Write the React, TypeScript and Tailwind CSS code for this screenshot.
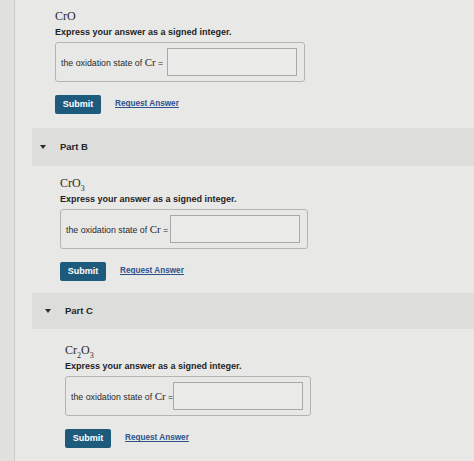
import React from 'react';

const sans = { fontFamily: '"Liberation Sans", Arial, sans-serif' };

function Formula({ children }: { children: React.ReactNode }) {
  return (
    <div className="h-4 leading-4 text-[12px] text-[#2a2a2a] font-['Liberation_Serif',serif]">
      {children}
    </div>
  );
}

function Question({ formula, offset, width }: { formula: React.ReactNode; offset: string; width: string }) {
  return (
    <div className={`flex flex-col ${offset}`}>
      <Formula>{formula}</Formula>
      <p className="mt-[3px] text-[9px] leading-[10px] font-bold text-[#1f1f1f]">
        Express your answer as a signed integer.
      </p>
      <div className={`mt-[5px] h-10 ${width} flex items-center pl-[5px] pr-[7px] border border-[#b4b4b2] rounded-[3px]`}>
        <span className="text-[8.8px] text-[#2a2a2a] whitespace-nowrap">
          the oxidation state of{' '}
          <span className="text-[11px] font-['Liberation_Serif',serif]">Cr</span> =
        </span>
        <div className="ml-auto w-[130px] h-[28px] border border-[#a9a9a7] bg-[#ebebe9]" />
      </div>
      <div className="mt-[13px] flex items-center gap-[14px]">
        <button className="w-[46px] h-[19px] bg-[#1e5a7c] rounded-[2px] text-white text-[9px] font-bold">
          Submit
        </button>
        <a className="text-[8.2px] font-bold text-[#2d528c] underline">Request Answer</a>
      </div>
    </div>
  );
}

function PartHeader({ label, offset, height }: { label: string; offset: string; height: string }) {
  return (
    <div className={`${height} bg-[#dddddb] flex items-center`}>
      <div className={`flex items-center ${offset}`}>
        <span className="w-0 h-0 border-l-[3.5px] border-r-[3.5px] border-t-[4px] border-l-transparent border-r-transparent border-t-[#2b2b2b]" />
        <span className="ml-[14px] text-[9.5px] font-bold text-[#262626]">{label}</span>
      </div>
    </div>
  );
}

export default function App() {
  return (
    <div className="w-[474px] h-[461px] overflow-hidden flex bg-[#e8e8e6]" style={sans}>
      <div className="w-[15px] shrink-0 bg-[#e1e1df] border-r border-[#c9c9c7]" />
      <div className="flex-1 flex flex-col pt-[8px] pl-[17px]">
        <Question formula="CrO" offset="ml-[23px]" width="w-[250px]" />

        <div className="mt-[14px]">
          <PartHeader label="Part B" offset="ml-[8px]" height="h-[38px]" />
        </div>
        <div className="mt-[9px]">
          <Question
            formula={<>CrO<sub className="text-[8px] align-[-2px]">3</sub></>}
            offset="ml-[28px]"
            width="w-[248px]"
          />
        </div>

        <div className="mt-[12px]">
          <PartHeader label="Part C" offset="ml-[13px]" height="h-[36px]" />
        </div>
        <div className="mt-[13px]">
          <Question
            formula={<>Cr<sub className="text-[8px] align-[-2px]">2</sub>O<sub className="text-[8px] align-[-2px]">3</sub></>}
            offset="ml-[33px]"
            width="w-[246px]"
          />
        </div>
      </div>
    </div>
  );
}
